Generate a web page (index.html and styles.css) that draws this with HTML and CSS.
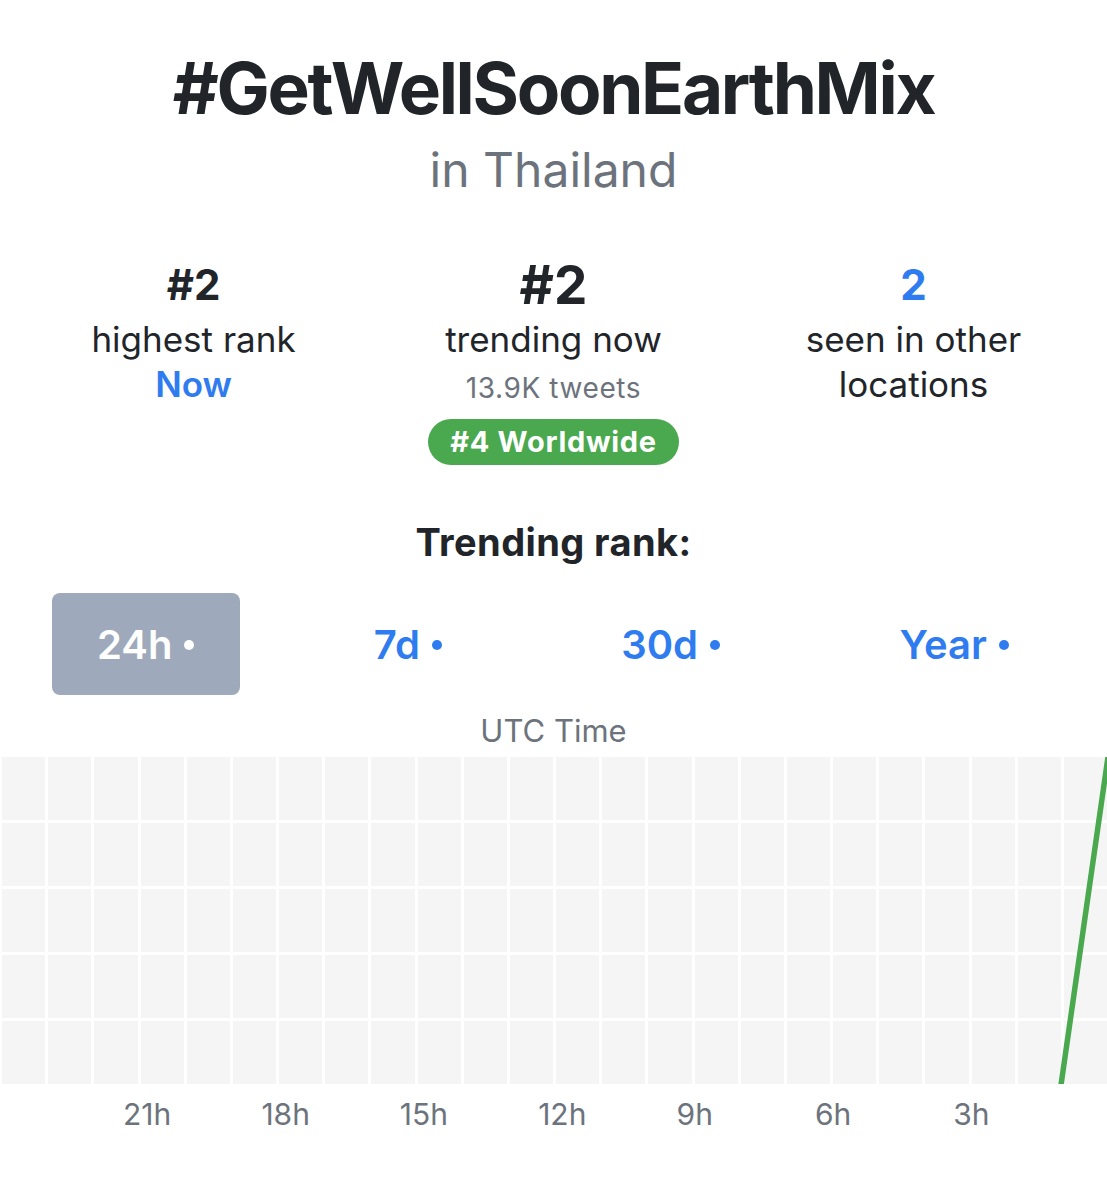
FILE: index.html
```html
<!DOCTYPE html>
<html lang="en">
<head>
<meta charset="utf-8">
<title>#GetWellSoonEarthMix in Thailand</title>
<link rel="stylesheet" href="styles.css">
</head>
<body>
<main class="page">
  <header class="head">
    <h1 class="title">#GetWellSoonEarthMix</h1>
    <p class="subtitle">in Thailand</p>
  </header>

  <section class="stats">
    <div class="stat">
      <div class="num">#2</div>
      <div class="label">highest rank</div>
      <div class="label link">Now</div>
    </div>
    <div class="stat">
      <div class="num big">#2</div>
      <div class="label">trending now</div>
      <div class="tweets">13.9K tweets</div>
      <div class="badge">#4 Worldwide</div>
    </div>
    <div class="stat">
      <div class="num blue">2</div>
      <div class="label">seen in other<br>locations</div>
    </div>
  </section>

  <h2 class="rank-title">Trending rank:</h2>

  <nav class="tabs">
    <div class="tab active">24h <span class="dot"></span></div>
    <div class="tab">7d <span class="dot"></span></div>
    <div class="tab">30d <span class="dot"></span></div>
    <div class="tab">Year <span class="dot"></span></div>
  </nav>

  <div class="utc">UTC Time</div>

  <div class="chart">
    <div class="grid">
      <div class="cell"></div><div class="cell"></div><div class="cell"></div><div class="cell"></div><div class="cell"></div><div class="cell"></div><div class="cell"></div><div class="cell"></div><div class="cell"></div><div class="cell"></div><div class="cell"></div><div class="cell"></div><div class="cell"></div><div class="cell"></div><div class="cell"></div><div class="cell"></div><div class="cell"></div><div class="cell"></div><div class="cell"></div><div class="cell"></div><div class="cell"></div><div class="cell"></div><div class="cell"></div><div class="cell"></div>
      <div class="cell"></div><div class="cell"></div><div class="cell"></div><div class="cell"></div><div class="cell"></div><div class="cell"></div><div class="cell"></div><div class="cell"></div><div class="cell"></div><div class="cell"></div><div class="cell"></div><div class="cell"></div><div class="cell"></div><div class="cell"></div><div class="cell"></div><div class="cell"></div><div class="cell"></div><div class="cell"></div><div class="cell"></div><div class="cell"></div><div class="cell"></div><div class="cell"></div><div class="cell"></div><div class="cell"></div>
      <div class="cell"></div><div class="cell"></div><div class="cell"></div><div class="cell"></div><div class="cell"></div><div class="cell"></div><div class="cell"></div><div class="cell"></div><div class="cell"></div><div class="cell"></div><div class="cell"></div><div class="cell"></div><div class="cell"></div><div class="cell"></div><div class="cell"></div><div class="cell"></div><div class="cell"></div><div class="cell"></div><div class="cell"></div><div class="cell"></div><div class="cell"></div><div class="cell"></div><div class="cell"></div><div class="cell"></div>
      <div class="cell"></div><div class="cell"></div><div class="cell"></div><div class="cell"></div><div class="cell"></div><div class="cell"></div><div class="cell"></div><div class="cell"></div><div class="cell"></div><div class="cell"></div><div class="cell"></div><div class="cell"></div><div class="cell"></div><div class="cell"></div><div class="cell"></div><div class="cell"></div><div class="cell"></div><div class="cell"></div><div class="cell"></div><div class="cell"></div><div class="cell"></div><div class="cell"></div><div class="cell"></div><div class="cell"></div>
      <div class="cell"></div><div class="cell"></div><div class="cell"></div><div class="cell"></div><div class="cell"></div><div class="cell"></div><div class="cell"></div><div class="cell"></div><div class="cell"></div><div class="cell"></div><div class="cell"></div><div class="cell"></div><div class="cell"></div><div class="cell"></div><div class="cell"></div><div class="cell"></div><div class="cell"></div><div class="cell"></div><div class="cell"></div><div class="cell"></div><div class="cell"></div><div class="cell"></div><div class="cell"></div><div class="cell"></div>
    </div>
    <svg class="line" viewBox="0 0 1107 327" width="1107" height="327" aria-hidden="true">
      <line x1="1061" y1="328" x2="1108" y2="0" stroke="#4aa84e" stroke-width="5.5" stroke-linecap="butt"/>
    </svg>
  </div>

  <div class="axis">
    <span class="tick">21h</span>
    <span class="tick">18h</span>
    <span class="tick">15h</span>
    <span class="tick">12h</span>
    <span class="tick">9h</span>
    <span class="tick">6h</span>
    <span class="tick">3h</span>
  </div>
</main>
</body>
</html>
```

FILE: styles.css
```css
* { box-sizing: border-box; }

html, body {
  margin: 0;
  padding: 0;
  background: #ffffff;
}

body {
  font-family: Inter, "Noto Sans", "Liberation Sans", sans-serif;
  color: #212529;
  width: 1107px;
  overflow: hidden;
}

.page {
  display: flex;
  flex-direction: column;
  align-items: stretch;
}

.head {
  display: flex;
  flex-direction: column;
  align-items: center;
  padding-top: 52px;
}

.title {
  margin: 0;
  font-size: 71px;
  line-height: 72px;
  font-weight: 700;
  letter-spacing: -2.3px;
  color: #212529;
}

.subtitle {
  margin: 18px 0 0;
  font-size: 48px;
  line-height: 56px;
  font-weight: 400;
  color: #6c737c;
}

.stats {
  display: grid;
  grid-template-columns: repeat(3, 360px);
  justify-content: center;
  margin-top: 57px;
}

.stat {
  display: flex;
  flex-direction: column;
  align-items: center;
  text-align: center;
}

.num {
  font-size: 42px;
  line-height: 60px;
  font-weight: 700;
  color: #212529;
}

.num.big {
  font-size: 53px;
}

.num.blue {
  color: #2f7cf0;
}

.label {
  font-size: 35px;
  line-height: 45px;
  font-weight: 400;
  color: #212529;
  margin-top: 2px;
}

.label.link {
  margin-top: 0;
  color: #2f7cf0;
  font-weight: 600;
}

.tweets {
  font-size: 28px;
  line-height: 40px;
  letter-spacing: 0.6px;
  color: #6c737c;
  margin-top: 6px;
}

.badge {
  margin-top: 11px;
  height: 46px;
  padding: 0 22px;
  border-radius: 23px;
  background: #4aa84e;
  color: #ffffff;
  font-size: 29px;
  font-weight: 700;
  line-height: 46px;
  letter-spacing: 0.7px;
}

.rank-title {
  margin: 55px 0 0;
  text-align: center;
  font-size: 38px;
  line-height: 44px;
  font-weight: 700;
  letter-spacing: 0.4px;
  color: #212529;
}

.tabs {
  display: flex;
  justify-content: space-between;
  padding: 0 52px;
  margin-top: 29px;
}

.tab {
  display: flex;
  align-items: center;
  height: 102px;
  padding: 0 46px 0 45px;
  border-radius: 8px;
  font-size: 40px;
  font-weight: 600;
  color: #2f7cf0;
  gap: 12px;
}

.tab.active {
  background: #9eaabb;
  color: #ffffff;
}

.dot {
  display: inline-block;
  width: 10px;
  height: 10px;
  border-radius: 50%;
  background: currentColor;
  margin-top: 2px;
}

.utc {
  margin-top: 16px;
  text-align: center;
  font-size: 31px;
  line-height: 40px;
  color: #6c737c;
}

.chart {
  position: relative;
  margin-top: 6px;
  height: 327px;
}

.grid {
  display: grid;
  grid-template-columns: repeat(24, 1fr);
  grid-template-rows: repeat(5, 1fr);
  gap: 3px;
  padding-left: 2px;
  height: 327px;
  background: #ffffff;
}

.cell {
  background: #f5f5f5;
}

.line {
  position: absolute;
  left: 0;
  top: 0;
}

.axis {
  display: flex;
  padding-left: 123px;
  margin-top: 10px;
}

.tick {
  width: 138.4px;
  flex: none;
  font-size: 30px;
  line-height: 40px;
  color: #6c737c;
}
```
